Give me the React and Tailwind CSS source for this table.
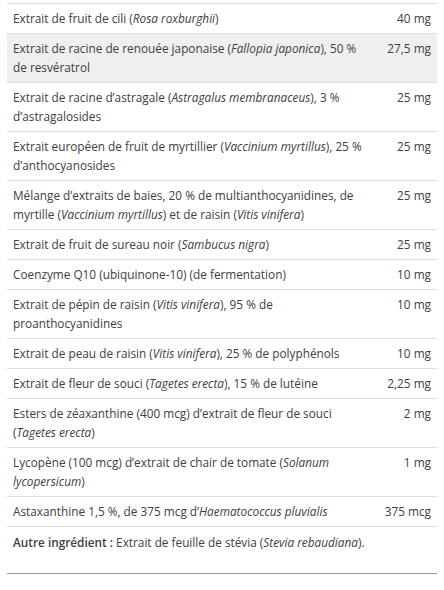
const rows = [
  { name: <>Extrait de fruit de cili (<i>Rosa roxburghii</i>)</>, dose: "40 mg" },
  {
    name: <>Extrait de racine de renouée japonaise (<i>Fallopia japonica</i>), 50 % de resvératrol</>,
    dose: "27,5 mg",
    shaded: true,
  },
  { name: <>Extrait de racine d’astragale (<i>Astragalus membranaceus</i>), 3 % d’astragalosides</>, dose: "25 mg" },
  { name: <>Extrait européen de fruit de myrtillier (<i>Vaccinium myrtillus</i>), 25 % d’anthocyanosides</>, dose: "25 mg" },
  {
    name: <>Mélange d’extraits de baies, 20 % de multianthocyanidines, de myrtille (<i>Vaccinium myrtillus</i>) et de raisin (<i>Vitis vinifera</i>)</>,
    dose: "25 mg",
  },
  { name: <>Extrait de fruit de sureau noir (<i>Sambucus nigra</i>)</>, dose: "25 mg" },
  { name: <>Coenzyme Q10 (ubiquinone-10) (de fermentation)</>, dose: "10 mg" },
  { name: <>Extrait de pépin de raisin (<i>Vitis vinifera</i>), 95 % de proanthocyanidines</>, dose: "10 mg" },
  { name: <>Extrait de peau de raisin (<i>Vitis vinifera</i>), 25 % de polyphénols</>, dose: "10 mg" },
  { name: <>Extrait de fleur de souci (<i>Tagetes erecta</i>), 15 % de lutéine</>, dose: "2,25 mg" },
  { name: <>Esters de zéaxanthine (400 mcg) d’extrait de fleur de souci (<i>Tagetes erecta</i>)</>, dose: "2 mg" },
  { name: <>Lycopène (100 mcg) d’extrait de chair de tomate (<i>Solanum lycopersicum</i>)</>, dose: "1 mg" },
  { name: <>Astaxanthine 1,5 %, de 375 mcg d’<i>Haematococcus pluvialis</i></>, dose: "375 mcg" },
];

export default function App() {
  return (
    <div
      className="w-[444px] h-[590px] bg-white text-[#404040] text-[11.8px] leading-[19px]"
      style={{ fontFamily: '"Open Sans", "Noto Sans", sans-serif' }}
    >
      <div className="pt-[3px] px-[7px]">
        <div className="border-t border-[#dcdcdc]">
          {rows.map((r, i) => (
            <div
              key={i}
              className={`flex justify-between border-b border-[#dcdcdc] px-[6px] py-[5px] ${r.shaded ? "bg-[#efefef]" : ""}`}
            >
              <div className="w-[352px]">{r.name}</div>
              <div className="text-right whitespace-nowrap">{r.dose}</div>
            </div>
          ))}
          <div className="px-[6px] pt-[6px] pb-[21px] border-b border-[#9a9a9a]">
            <b className="font-semibold">Autre ingrédient :</b> Extrait de feuille de stévia (<i>Stevia rebaudiana</i>).
          </div>
        </div>
      </div>
    </div>
  );
}
